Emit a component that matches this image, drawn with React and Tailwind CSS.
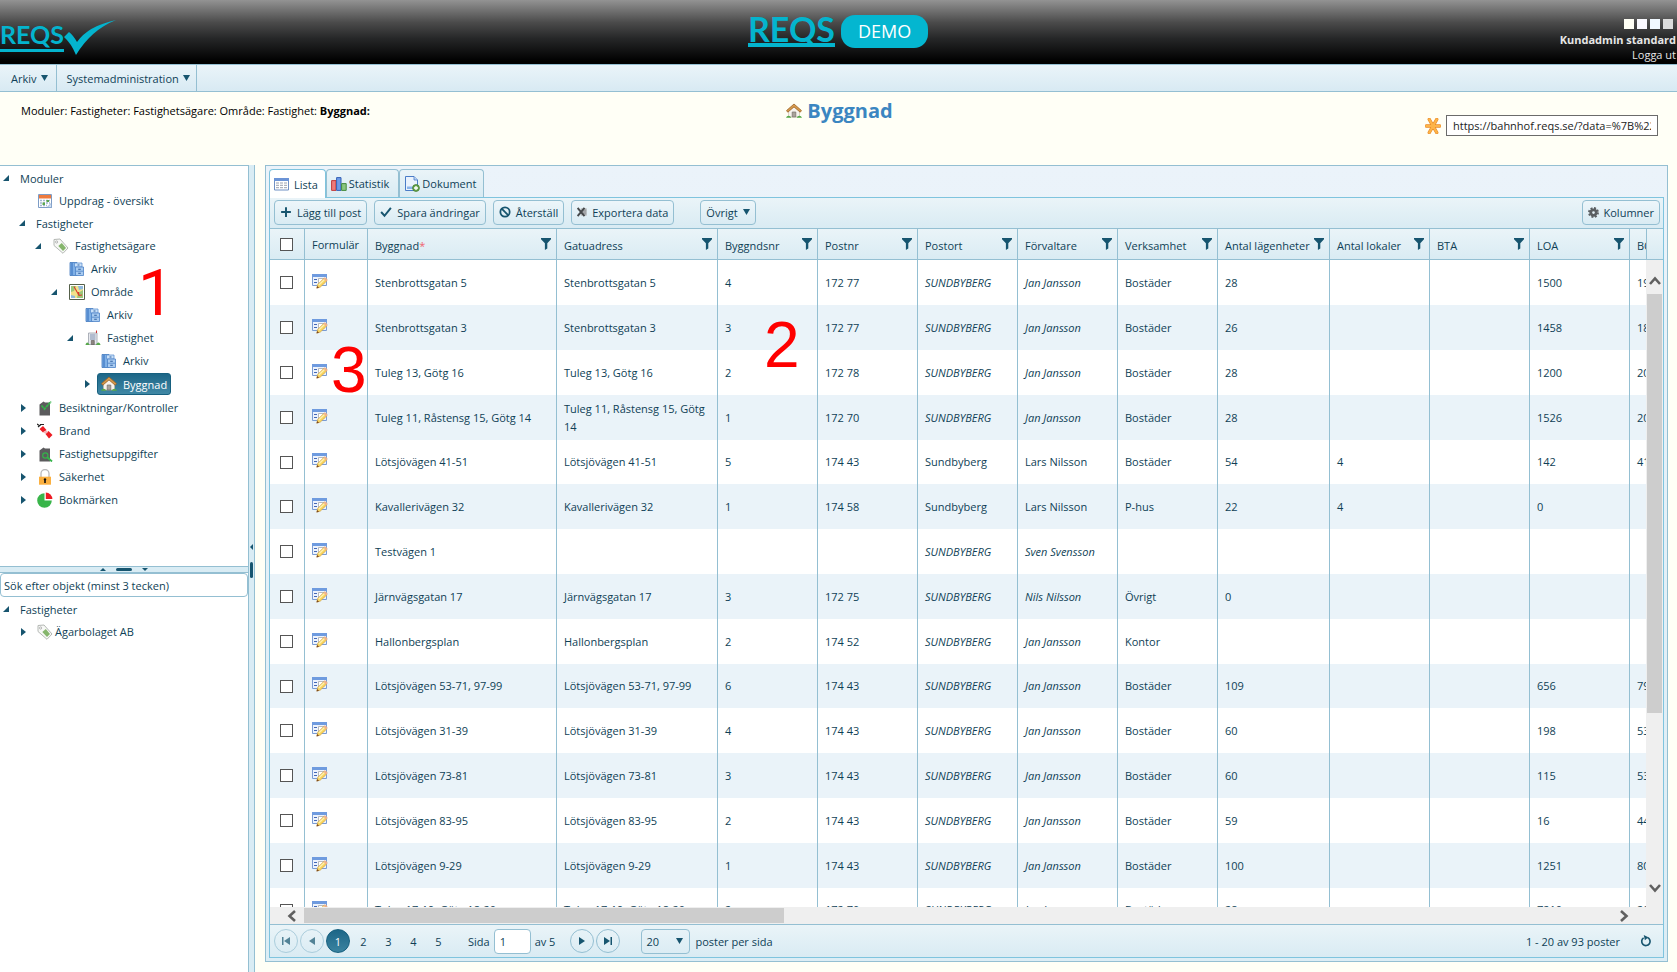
import React from "react";

const BORDER = "border-[#94bfd2]";

function Caret({ open }) {
  return open ? (
    <svg viewBox="0 0 6 6" className="size-[6px]"><path d="M6 0V6H0Z" fill="#17556f" /></svg>
  ) : (
    <svg viewBox="0 0 5 8" className="h-2 w-[5px]"><path d="M0 0L5 4L0 8Z" fill="#17556f" /></svg>
  );
}
function Down() {
  return <svg viewBox="0 0 7 6" className="h-[6px] w-[7px]"><path d="M0 0H7L3.5 6Z" fill="#17556f" /></svg>;
}
function Svg({ children, className = "size-4" }) {
  return <svg viewBox="0 0 16 16" className={className + " shrink-0"} aria-hidden="true">{children}</svg>;
}
function House() {
  return (
    <Svg>
      <path d="M2.5 8L8 3L13.5 8V14H2.5Z" fill="#f6f3ee" stroke="#c9b9a4" strokeWidth=".6" />
      <path d="M6.2 9H9.8V14H6.2Z" fill="#a9a29a" stroke="#77706a" strokeWidth=".7" />
      <path d="M8 1L0.5 7.6L1.8 9.2L8 3.9L14.2 9.2L15.5 7.6Z" fill="#d79b4d" stroke="#9a6226" strokeWidth=".8" />
      <path d="M0 14.8C1 12 4 12 5.5 14.8ZM10.5 14.8C12 12 15 12 16 14.8Z" fill="#55a94a" />
    </Svg>
  );
}
function Tag() {
  return (
    <Svg>
      <path d="M1 1.5L7 1L15 10L10 15.3L1 7.5Z" fill="#f7f8f6" stroke="#b4b8b4" strokeWidth="1" />
      <circle cx="3.6" cy="4" r="1.1" fill="#fff" stroke="#999" strokeWidth=".7" />
      <path d="M5.3 8L8.8 5L13 10L10 13Z" fill="#85b56c" />
    </Svg>
  );
}
function Cabinet() {
  return (
    <Svg>
      <path d="M1 1.5H8V14.5H1Z" fill="#7fb0e6" stroke="#3f77bd" strokeWidth=".8" />
      <path d="M3 2V14" stroke="#4f86cc" strokeWidth="1.6" />
      <path d="M5.5 2H13V6H5.5Z" fill="#c9e0f8" stroke="#5f92d0" strokeWidth=".8" />
      <path d="M6.5 6H14.5V14.5H6.5Z" fill="#a9cbf0" stroke="#4b82c6" strokeWidth=".8" />
      <path d="M6.9 10.2H14.1" stroke="#4b82c6" strokeWidth=".8" />
      <path d="M9.2 8.2H11.8M9.2 12.3H11.8M8.5 4H10.5" stroke="#2f5f9f" strokeWidth="1.1" />
    </Svg>
  );
}
function MapIcon() {
  return (
    <Svg>
      <path d="M.5.5H15.5V15.5H.5Z" fill="#fff" stroke="#55604a" strokeWidth="1" />
      <path d="M2 2H14V14H2Z" fill="#f2e28a" />
      <path d="M2 2H7L5 7L2 8ZM9 9L14 6V14H8Z" fill="#9cc77a" />
      <path d="M9 2H14V5L10 6ZM2 11L6 12V14H2Z" fill="#8fb9dd" />
      <path d="M5 2.5L10 11.5L13 11M10 11.5L9.5 8" fill="none" stroke="#dd3a2a" strokeWidth="1.1" />
    </Svg>
  );
}
function Tower() {
  return (
    <Svg>
      <path d="M3.5 3H12V14.5H3.5Z" fill="#e7e9ee" stroke="#9aa0aa" strokeWidth=".8" />
      <path d="M5 5H10.5M5 7H10.5M5 9H10.5" stroke="#7d8fb0" strokeWidth="1" />
      <path d="M6.3 10.5H9.3V14.5H6.3Z" fill="#8c8580" stroke="#5c5652" strokeWidth=".6" />
      <path d="M11.5 3V.5" stroke="#c33" strokeWidth="1.1" />
      <path d="M.5 15C1 11.5 3.5 11.5 4.5 15ZM11 15C12 11.5 15 11.5 15.5 15Z" fill="#58a84c" />
    </Svg>
  );
}
function Calendar() {
  return (
    <Svg>
      <path d="M1.5 1.5H14.5V14.5H1.5Z" fill="#fff" stroke="#7d9cc6" strokeWidth="1" />
      <path d="M2 2H14V5.5H2Z" fill="#ee7a3d" />
      <path d="M3 7.5H13M3 10H13M3 12.5H10" stroke="#a3b6d0" strokeWidth="1.4" strokeDasharray="2 1" />
      <path d="M5.5 9.5H8V12H5.5ZM9.5 7H12V9H9.5Z" fill="#5aa64b" />
      <path d="M14.5 10L10 14.5H14.5Z" fill="#cfdff2" stroke="#7d9cc6" strokeWidth=".7" />
    </Svg>
  );
}
function HouseDark({ children }) {
  return <Svg><path d="M2.5 15.5V4.5L6.5 1.5L8 2.5H13V15.5Z" fill="#5b5b5d" />{children}</Svg>;
}
function Inspect() {
  return <HouseDark><path d="M4.5 5.5L7.5 9L14 1.5" fill="none" stroke="#35b34a" strokeWidth="1.8" strokeDasharray="3 .5" /></HouseDark>;
}
function HouseSearch() {
  return (
    <HouseDark>
      <circle cx="8.3" cy="9.5" r="2.6" fill="none" stroke="#35b34a" strokeWidth="1.2" />
      <path d="M10.5 11.5L15 15.5" stroke="#35b34a" strokeWidth="1.8" />
    </HouseDark>
  );
}
function Fire() {
  return (
    <Svg>
      <path d="M0 1L3 3M1 4L4 1.5M3 1.5H7" stroke="#222" strokeWidth="1.1" />
      <path d="M2.5 6L6 3L9.5 7L6 9.5ZM8.5 11L11.5 8L15.5 12L12 15.5Z" fill="#ed1c24" />
      <path d="M6 9L9.5 7.5L11 9L8.5 11Z" fill="#f7b2b4" />
    </Svg>
  );
}
function Lock() {
  return (
    <Svg>
      <path d="M4 8V4.5A4 4 0 0 1 12 4.5V8" fill="none" stroke="#b9b9bb" strokeWidth="1.3" />
      <path d="M2 7.7H14V15.7H2Z" fill="#fbb040" />
      <path d="M8 9.2A1.3 1.3 0 0 1 8.8 11.5V14H7.2V11.5A1.3 1.3 0 0 1 8 9.2Z" fill="#111" />
    </Svg>
  );
}
function Pie() {
  return (
    <Svg>
      <path d="M7.5 8.5V1.2A7.3 7.3 0 1 0 14.8 8.5Z" fill="#39b54a" />
      <path d="M8.8 7V.4A6.8 6.8 0 0 1 15.4 7Z" fill="#ed1c24" />
    </Svg>
  );
}
function FormEdit() {
  return (
    <Svg>
      <path d="M.5 1.5H14.5V12.5H.5Z" fill="#edf3fc" stroke="#7a9cd3" strokeWidth="1" />
      <path d="M0 1H15V4H0Z" fill="#6f9bdf" />
      <path d="M2 6.5H5M2 9.5H5" stroke="#4467b5" strokeWidth="1" />
      <path d="M6.5 5.5H12V10.5H6.5Z" fill="#fff" stroke="#a9a9a9" strokeWidth=".8" />
      <path d="M4.8 15L5.6 11.6L12 5.2C13.3 4.6 15.4 6 15 7.7L8.2 14.2Z" fill="#f9d55e" stroke="#c9973f" strokeWidth=".6" />
      <path d="M6.8 12L13 6" stroke="#fdf1b3" strokeWidth="1.2" />
      <path d="M4.5 15.4L5.2 12.9L7.1 14.7Z" fill="#7a4a22" />
      <path d="M12.2 5C13.5 4.4 15.6 6 15 7.8L14 8.4L11.6 5.8Z" fill="#f0b08f" />
    </Svg>
  );
}
function ListIcon() {
  return (
    <Svg>
      <path d="M.5 2.5H14.5V14H.5Z" fill="#fff" stroke="#6f8fc4" strokeWidth="1" />
      <path d="M0 2H15V5H0Z" fill="#6b93d6" />
      <path d="M2 7H13M2 9.3H13M2 11.7H13" stroke="#999fae" strokeWidth="1" strokeDasharray="3 1" />
    </Svg>
  );
}
function Bars() {
  return (
    <Svg>
      <path d="M.6 4.6H5V14.4H.6Z" fill="#ef7b7b" stroke="#c23b3b" strokeWidth="1" />
      <path d="M5.6 1.6H10V14.4H5.6Z" fill="#6f9be8" stroke="#3460b4" strokeWidth="1" />
      <path d="M10.6 7.6H15.2V14.4H10.6Z" fill="#8cc67e" stroke="#448a3c" strokeWidth="1" />
    </Svg>
  );
}
function DocAdd() {
  return (
    <Svg>
      <path d="M1.5.5H10L13.5 4V14.5H1.5Z" fill="#e9f2fd" stroke="#4a7cc7" strokeWidth="1" />
      <path d="M10 .5V4H13.5" fill="#bcd5f5" stroke="#4a7cc7" strokeWidth=".8" />
      <path d="M3 10.5H10V13H3Z" fill="#8ab4ea" />
      <circle cx="12" cy="12" r="3.4" fill="#6aa84f" stroke="#437a2d" strokeWidth=".8" />
      <path d="M12 10V14M10 12H14" stroke="#fff" strokeWidth="1.3" />
    </Svg>
  );
}
function Funnel() {
  return (
    <svg viewBox="0 0 10 12" className="h-3 w-[10px] shrink-0" aria-hidden="true">
      <path d="M0 0H10V1.3L6.3 5.2V10.5L3.9 12V5.2L0 1.3Z" fill="#17556f" />
    </svg>
  );
}
function Star() {
  return (
    <Svg>
      <path d="M4.3 1.5L11.7 14.5M11.7 1.5L4.3 14.5M1.2 8H14.8" stroke="#e8892a" strokeWidth="3.4" strokeLinecap="round" />
      <path d="M4.3 1.5L11.7 14.5M11.7 1.5L4.3 14.5M1.2 8H14.8" stroke="#fdb447" strokeWidth="2.2" strokeLinecap="round" />
    </Svg>
  );
}
function Gear() {
  return (
    <Svg className="size-[11px]">
      <circle cx="8" cy="8" r="4" fill="none" stroke="#5a5e61" strokeWidth="4" />
      <circle cx="8" cy="8" r="6.6" fill="none" stroke="#5a5e61" strokeWidth="2.6" strokeDasharray="2.9 2.28" />
    </Svg>
  );
}
function Line({ d, className = "size-3" }) {
  return <Svg className={className}><path d={d} fill="none" stroke="#17556f" strokeWidth="2.6" /></Svg>;
}
function Excel() {
  return (
    <Svg className="size-[10px]">
      <path d="M6 2H15.5V14H6Z" fill="#b9bcbe" />
      <path d="M8 5H15M8 8H15M8 11H15" stroke="#77797b" strokeWidth="1" />
      <path d="M1 1.5L12 14.5M12 1.5L1 14.5" stroke="#46494b" strokeWidth="3" />
    </Svg>
  );
}

const PAD = ["pl-0", "pl-4", "pl-8", "pl-12", "pl-16", "pl-20"];
const TREE = [
  [0, true, null, "Moduler"],
  [1, null, Calendar, "Uppdrag - översikt"],
  [1, true, null, "Fastigheter"],
  [2, true, Tag, "Fastighetsägare"],
  [3, null, Cabinet, "Arkiv"],
  [3, true, MapIcon, "Område"],
  [4, null, Cabinet, "Arkiv"],
  [4, true, Tower, "Fastighet"],
  [5, null, Cabinet, "Arkiv"],
  [5, false, House, "Byggnad", true],
  [1, false, Inspect, "Besiktningar/Kontroller"],
  [1, false, Fire, "Brand"],
  [1, false, HouseSearch, "Fastighetsuppgifter"],
  [1, false, Lock, "Säkerhet"],
  [1, false, Pie, "Bokmärken"],
];

function TreeItem({ item, tight }) {
  const [level, open, Icon, label, selected] = item;
  return (
    <li className={"flex items-center " + PAD[level] + " " + (selected ? "h-6" : Icon ? "h-[23px]" : "h-[22px]")}>
      <span className={"flex w-[17px] " + (open ? "pl-[3px]" : "pl-[5px]")}>
        {open !== null && <button type="button" aria-label={label}><Caret open={open} /></button>}
      </span>
      <a
        href="#"
        className={
          "flex h-[22px] items-center rounded-[3px] border whitespace-nowrap " +
          (Icon ? "px-[3px] " : "px-[2px] ") +
          (tight ? "gap-[2px] " : "gap-[6px] ") +
          (selected ? "border-[#17607f] bg-linear-to-b from-[#1c6687] to-[#4088a5] text-white" : "border-transparent")
        }
      >
        {Icon && <Icon />}
        {label}
      </a>
    </li>
  );
}

const COLUMNS = [
  ["Byggnad", "w-[189px]"],
  ["Gatuadress", "w-[161px]"],
  ["Byggndsnr", "w-[100px]"],
  ["Postnr", "w-[100px]"],
  ["Postort", "w-[100px]"],
  ["Förvaltare", "w-[100px]"],
  ["Verksamhet", "w-[100px]"],
  ["Antal lägenheter", "w-[112px]"],
  ["Antal lokaler", "w-[100px]"],
  ["BTA", "w-[100px]"],
  ["LOA", "w-[100px]"],
  ["BOA", "w-[100px]"],
];
const S = "SUNDBYBERG";
const J = "Jan Jansson";
const B = "Bostäder";
const ROWS = [
  ["Stenbrottsgatan 5", "Stenbrottsgatan 5", "4", "172 77", S, J, B, "28", "", "", "1500", "1950"],
  ["Stenbrottsgatan 3", "Stenbrottsgatan 3", "3", "172 77", S, J, B, "26", "", "", "1458", "1850"],
  ["Tuleg 13, Götg 16", "Tuleg 13, Götg 16", "2", "172 78", S, J, B, "28", "", "", "1200", "2000"],
  ["Tuleg 11, Råstensg 15, Götg 14", "Tuleg 11, Råstensg 15, Götg 14", "1", "172 70", S, J, B, "28", "", "", "1526", "2000"],
  ["Lötsjövägen 41-51", "Lötsjövägen 41-51", "5", "174 43", "Sundbyberg", "Lars Nilsson", B, "54", "4", "", "142", "4100"],
  ["Kavallerivägen 32", "Kavallerivägen 32", "1", "174 58", "Sundbyberg", "Lars Nilsson", "P-hus", "22", "4", "", "0", ""],
  ["Testvägen 1", "", "", "", S, "Sven Svensson", "", "", "", "", "", ""],
  ["Järnvägsgatan 17", "Järnvägsgatan 17", "3", "172 75", S, "Nils Nilsson", "Övrigt", "0", "", "", "", ""],
  ["Hallonbergsplan", "Hallonbergsplan", "2", "174 52", S, J, "Kontor", "", "", "", "", ""],
  ["Lötsjövägen 53-71, 97-99", "Lötsjövägen 53-71, 97-99", "6", "174 43", S, J, B, "109", "", "", "656", "7900"],
  ["Lötsjövägen 31-39", "Lötsjövägen 31-39", "4", "174 43", S, J, B, "60", "", "", "198", "5300"],
  ["Lötsjövägen 73-81", "Lötsjövägen 73-81", "3", "174 43", S, J, B, "60", "", "", "115", "5300"],
  ["Lötsjövägen 83-95", "Lötsjövägen 83-95", "2", "174 43", S, J, B, "59", "", "", "16", "4400"],
  ["Lötsjövägen 9-29", "Lötsjövägen 9-29", "1", "174 43", S, J, B, "100", "", "", "1251", "8000"],
  ["Tuleg 17-19, Götg 18-20", "Tuleg 17-19, Götg 18-20", "2", "172 70", S, J, B, "28", "", "", "7210", "2000"],
];

function Check({ label }) {
  return <input type="checkbox" aria-label={label} className="block size-[13px] appearance-none border border-[#555] bg-white" />;
}

function Grid() {
  const cell = "border-r pr-[5px] pl-[7px] last:border-r-0 " + BORDER;
  return (
    <table className="w-max table-fixed border-separate border-spacing-0">
      <thead>
        <tr className="h-[31px] bg-linear-to-b from-[#eaf4f8] to-[#d9ebf3] text-left">
          <th className={"w-[35px] border-r border-b pl-[10px] font-normal " + BORDER}><Check label="Markera alla" /></th>
          <th className={"w-[63px] border-b font-normal " + cell}>Formulär</th>
          {COLUMNS.map(([name, width]) => (
            <th key={name} className={"border-b font-normal " + width + " " + cell}>
              <div className="flex items-center justify-between">
                <span className="pt-[2px] whitespace-nowrap">{name}{name === "Byggnad" && <span className="text-[#f0646e]">*</span>}</span>
                <Funnel />
              </div>
            </th>
          ))}
        </tr>
      </thead>
      <tbody>
        {ROWS.map((row) => (
          <tr key={row[0]} className="h-[45px] bg-white even:bg-[#eaf3f9] [&:nth-child(5n)]:h-11">
            <td className={"border-r pl-[10px] " + BORDER}><Check label={row[0]} /></td>
            <td className={cell}>
              <button type="button" aria-label={"Formulär " + row[0]} className="block pb-1"><FormEdit /></button>
            </td>
            {row.map((value, i) => (
              <td
                key={i}
                className={cell + " leading-[18px]" + (i === 4 && value === S ? " italic" : "") + (i === 5 && !value.startsWith("Lars") ? " italic" : "")}
              >
                {value}
              </td>
            ))}
          </tr>
        ))}
      </tbody>
    </table>
  );
}

function Tool({ children, className = "" }) {
  return (
    <button type="button" className={"flex h-[25px] items-center gap-[5px] rounded-[4px] border bg-linear-to-b from-[#edf6fa] to-[#d9ebf3] px-[5px] whitespace-nowrap " + BORDER + " " + className}>
      {children}
    </button>
  );
}
function Round({ label, d, dim }) {
  return (
    <button type="button" aria-label={label} className={"flex size-6 items-center justify-center rounded-full border " + BORDER + (dim ? " opacity-70" : "")}>
      <svg viewBox="0 0 8 8" className="size-2"><path d={d} fill="#17556f" /></svg>
    </button>
  );
}

export default function App() {
  return (
    <div className="relative flex h-screen flex-col overflow-hidden bg-[#fffff6] font-['Open_Sans','Noto_Sans',sans-serif] text-[11px] leading-[15px] text-[#0f3f56]">
      <header className="flex h-16 shrink-0 items-start justify-between bg-[linear-gradient(#939393,#7e7e7e_10%,#4b4b4b_35%,#262728_60%,#000_96%)]">
        <a href="#" aria-label="REQS" className="flex flex-1 items-start pt-5 text-[#04b4ce]">
          <span className="border-b-[3px] font-['Lato',sans-serif] text-[25px] leading-[29px] font-bold">REQS</span>
          <svg viewBox="0 0 52 36" className="h-9 w-[52px]"><path d="M0 17L5 12Q9 15 13 22Q24 6 52 0Q27 10 12 35Q7 23 0 17Z" fill="#04b4ce" /></svg>
        </a>
        <div className="flex items-start gap-[6px] pt-[15px]">
          <span className="border-b-[4px] border-[#04b4ce] font-['Lato',sans-serif] text-[34px] leading-[28px] font-bold text-[#04b4ce]">REQS</span>
          <span className="flex h-[33px] w-[87px] items-center justify-center rounded-[14px] bg-[#04b6d0] text-[18px] text-white">DEMO</span>
        </div>
        <div className="flex flex-1 flex-col items-end pt-[19px] pr-px text-[#e6e6e6]">
          <div className="mb-[3px] flex gap-[3px] pr-[3px]">
            <button type="button" aria-label="Tema 1" className="size-[10px] bg-[#fffff5]" />
            <button type="button" aria-label="Tema 2" className="size-[10px] bg-[#fafaff]" />
            <button type="button" aria-label="Tema 3" className="size-[10px] bg-[#f0f8ff]" />
            <button type="button" aria-label="Tema 4" className="size-[10px] bg-[#dcdcdc]" />
          </div>
          <strong className="font-bold">Kundadmin standard</strong>
          <a href="#">Logga ut</a>
        </div>
      </header>

      <nav className={"flex h-7 shrink-0 border-y bg-linear-to-b from-[#eaf4f9] to-[#d8eaf3] " + BORDER}>
        <button type="button" className={"flex items-center gap-1 border-r pr-2 pl-[11px] " + BORDER}>Arkiv <Down /></button>
        <button type="button" className={"flex items-center gap-1 border-r pr-[6px] pl-[10px] " + BORDER}>Systemadministration <Down /></button>
      </nav>

      <div className="flex h-[73px] shrink-0 items-start pr-[19px] pl-[21px]">
        <p className="flex-1 pt-[11px] text-black">Moduler: Fastigheter: Fastighetsägare: Område: Fastighet: <b>Byggnad:</b></p>
        <h1 className="flex items-center gap-[5px] pt-[6px] text-[20px] leading-[26px] font-bold text-[#3b86c1]"><House />Byggnad</h1>
        <label className="flex flex-1 items-center justify-end gap-[5px] pt-[23px]">
          <Star />
          <input readOnly aria-label="Länk" defaultValue="https://bahnhof.reqs.se/?data=%7B%22module%22" className="h-[21px] w-[212px] border border-[#6b6b6b] bg-white px-[6px] text-[#222]" />
        </label>
      </div>

      <div className="flex min-h-0 flex-1">
        <aside className={"flex w-[248px] shrink-0 flex-col border-t bg-white " + BORDER}>
          <ul className="h-[400px] shrink-0 pt-px">
            {TREE.map((item, i) => <TreeItem key={i} item={item} />)}
          </ul>
          <div className={"flex h-[7px] shrink-0 items-center justify-center gap-[10px] border-y bg-[#d9ecf4] " + BORDER}>
            <svg viewBox="0 0 6 3" className="h-[3px] w-[6px]"><path d="M0 3L3 0L6 3Z" fill="#17556f" /></svg>
            <span className="h-[3px] w-4 rounded-full bg-[#17556f]" />
            <svg viewBox="0 0 6 3" className="h-[3px] w-[6px]"><path d="M0 0H6L3 3Z" fill="#17556f" /></svg>
          </div>
          <input aria-label="Sök efter objekt" placeholder="Sök efter objekt (minst 3 tecken)" className={"h-6 shrink-0 rounded-[4px] border px-[3px] placeholder:text-[#0f3f56] " + BORDER} />
          <ul className="pt-px">
            <TreeItem item={[0, true, null, "Fastigheter"]} />
            <TreeItem item={[1, false, Tag, "Ägarbolaget AB"]} tight />
          </ul>
        </aside>
        <div className={"flex w-[7px] shrink-0 flex-col items-center justify-center gap-3 border-x bg-[#d9ecf4] pb-4 " + BORDER}>
          <svg viewBox="0 0 3 6" className="h-[6px] w-[3px]"><path d="M3 0V6L0 3Z" fill="#17556f" /></svg>
          <span className="h-4 w-[3px] rounded-full bg-[#17556f]" />
        </div>

        <main className="flex min-w-0 flex-1 pr-[9px] pb-[10px] pl-[10px]">
          <div className={"flex min-w-0 flex-1 flex-col border bg-linear-to-b from-[#ebf3fa] to-[#dcedf5] p-[3px] " + BORDER}>
            <div role="tablist" className="flex h-7">
              <button role="tab" aria-selected="true" type="button" className="relative z-10 -mb-px flex items-center gap-1 rounded-t-[4px] border border-b-0 border-[#7fc4de] bg-white pr-[7px] pl-1"><ListIcon />Lista</button>
              <button role="tab" type="button" className="flex items-center gap-[2px] rounded-t-[4px] border border-b-0 border-[#94bfd2] bg-linear-to-b from-[#eaf4f8] to-[#d9ebf3] pr-[9px] pl-1"><Bars />Statistik</button>
              <button role="tab" type="button" className="flex items-center gap-[2px] rounded-t-[4px] border border-b-0 border-[#94bfd2] bg-linear-to-b from-[#eaf4f8] to-[#d9ebf3] pr-[7px] pl-1"><DocAdd />Dokument</button>
            </div>

            <section className="flex min-h-0 flex-1 flex-col border border-[#7fc4de]">
              <div className={"flex h-[31px] shrink-0 items-center gap-[7px] border-b bg-linear-to-b from-[#eaf4f8] to-[#d9ebf3] pr-[3px] pb-[2px] pl-1 " + BORDER}>
                <Tool><Line d="M8 1.5V14.5M1.5 8H14.5" />Lägg till post</Tool>
                <Tool><Line d="M1.5 8L6 13L14.5 2.5" />Spara ändringar</Tool>
                <Tool><Svg className="size-3"><circle cx="8" cy="8" r="6.2" fill="none" stroke="#17556f" strokeWidth="2.4" /><path d="M3.6 3.6L12.4 12.4" stroke="#17556f" strokeWidth="2.4" /></Svg>Återställ</Tool>
                <Tool><Excel />Exportera data</Tool>
                <Tool className="ml-[19px]">Övrigt <Down /></Tool>
                <Tool className="ml-auto"><Gear />Kolumner</Tool>
              </div>

              <div className="flex min-h-0 flex-1 bg-[#efefef]">
                <div className="min-w-0 flex-1 overflow-hidden"><Grid /></div>
                <div className="flex w-[17px] shrink-0 flex-col">
                  <div className={"h-[31px] border-b border-l bg-linear-to-b from-[#eaf4f8] to-[#d9ebf3] " + BORDER} />
                  <div className="flex flex-1 flex-col items-center pt-4 pb-[14px]">
                    <svg viewBox="0 0 12 9" className="h-[9px] w-3"><path d="M1 8L6 2.5L11 8" fill="none" stroke="#606060" strokeWidth="2.6" /></svg>
                    <div className="mt-[9px] mb-auto h-[419px] w-[15px] bg-[#cdcdcd]" />
                    <svg viewBox="0 0 12 9" className="h-[9px] w-3"><path d="M1 1L6 6.5L11 1" fill="none" stroke="#606060" strokeWidth="2.6" /></svg>
                  </div>
                </div>
              </div>
              <div className="flex h-[17px] shrink-0 items-center bg-[#efefef] pr-[34px] pl-[17px]">
                <svg viewBox="0 0 9 12" className="h-3 w-[9px]"><path d="M8 1L2.5 6L8 11" fill="none" stroke="#606060" strokeWidth="2.6" /></svg>
                <div className="mr-auto ml-2 h-[15px] w-[480px] bg-[#cdcdcd]" />
                <svg viewBox="0 0 9 12" className="h-3 w-[9px]"><path d="M1 1L6.5 6L1 11" fill="none" stroke="#606060" strokeWidth="2.6" /></svg>
              </div>

              <footer className={"flex h-[33px] shrink-0 items-center border-t bg-linear-to-b from-[#eaf4f8] to-[#d9ebf3] pr-[11px] pl-1 " + BORDER}>
                <div className="flex items-center gap-[2px]">
                  <Round dim label="Första" d="M0 0H1.5V8H0ZM8 0V8L2 4Z" />
                  <Round dim label="Föregående" d="M7 0V8L1 4Z" />
                  <button type="button" className="size-6 rounded-full border border-[#17607f] bg-linear-to-b from-[#1c6687] to-[#3a83a0] text-white">1</button>
                </div>
                <div className="flex pl-px">
                  {["2", "3", "4", "5"].map((n) => <button key={n} type="button" className="w-[25px]">{n}</button>)}
                </div>
                <label className="ml-[17px] flex items-center gap-1">
                  Sida
                  <input defaultValue="1" className={"h-[25px] w-[37px] rounded-[4px] border bg-white px-[5px] " + BORDER} />
                </label>
                <span className="ml-1">av 5</span>
                <div className="ml-[15px] flex gap-[2px]">
                  <Round label="Nästa" d="M1 0L7 4L1 8Z" />
                  <Round label="Sista" d="M0 0L6 4L0 8ZM6.5 0H8V8H6.5Z" />
                </div>
                <label className="ml-[21px] flex items-center gap-[5px]">
                  <span className="grid items-center">
                    <select className={"col-start-1 row-start-1 h-[25px] w-[49px] appearance-none rounded-[4px] border px-1 " + BORDER}><option>20</option></select>
                    <span className="pointer-events-none col-start-1 row-start-1 mr-[7px] justify-self-end"><Down /></span>
                  </span>
                  poster per sida
                </label>
                <span className="ml-auto">1 - 20 av 93 poster</span>
                <button type="button" aria-label="Uppdatera" className="ml-5">
                  <Svg className="size-3"><path d="M10 3.3A5.6 5.6 0 1 1 4.8 3.8" fill="none" stroke="#17556f" strokeWidth="2.2" /><path d="M5 0L11 3L6.5 7Z" fill="#17556f" /></Svg>
                </button>
              </footer>
            </section>
          </div>
        </main>
      </div>

      <span className="pointer-events-none absolute top-[258px] left-[138px] font-['Roboto',sans-serif] text-[64px] leading-[72px] text-[#ff0000]">1</span>
      <span className="pointer-events-none absolute top-[309px] left-[764px] font-['Liberation_Sans',sans-serif] text-[64px] leading-[72px] text-[#ff0000]">2</span>
      <span className="pointer-events-none absolute top-[334px] left-[331px] font-['Liberation_Sans',sans-serif] text-[64px] leading-[72px] text-[#ff0000]">3</span>
    </div>
  );
}
